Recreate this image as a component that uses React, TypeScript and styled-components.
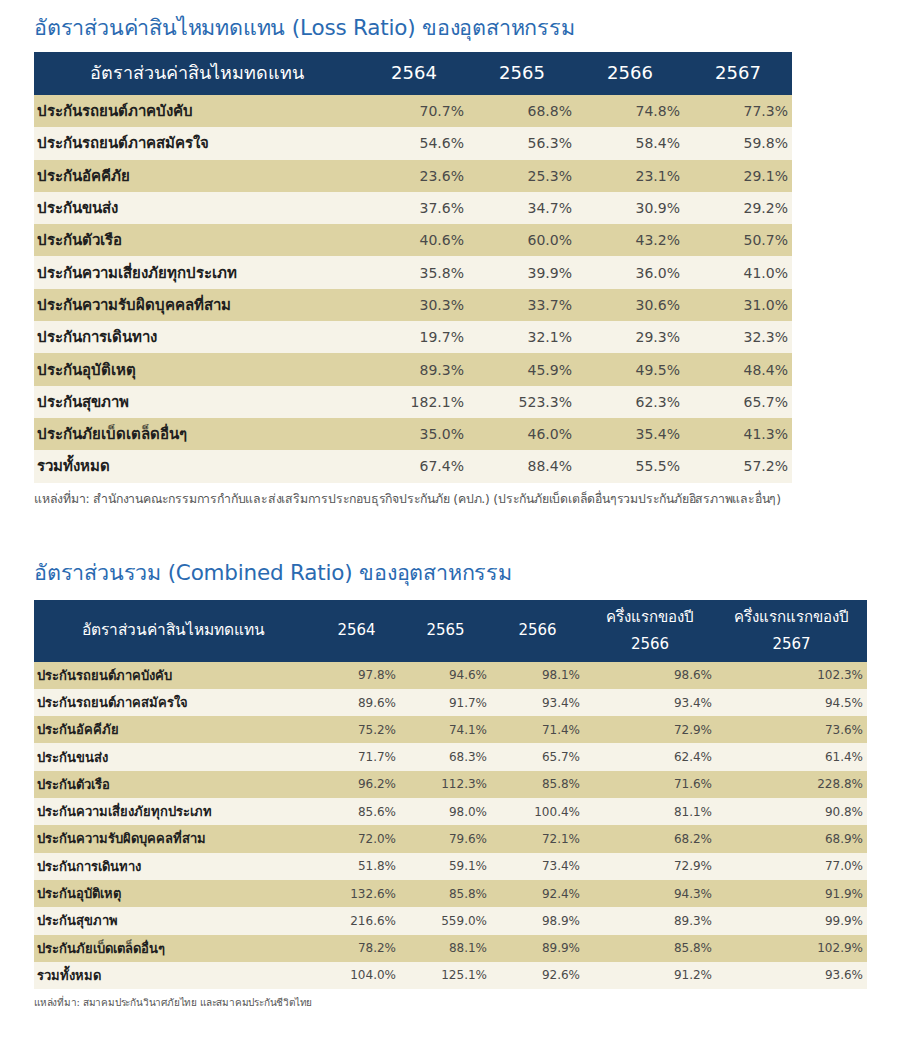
import React from "react";
import styled, { createGlobalStyle } from "styled-components";

const Global = createGlobalStyle`
  html, body { margin: 0; padding: 0; background: #ffffff; }
  body { font-family: "DejaVu Sans", "Noto Sans", sans-serif; }
`;

const Page = styled.div`
  width: 909px;
  height: 1038px;
  box-sizing: border-box;
  padding: 14px 0 0 34px;
  display: flex;
  flex-direction: column;
  align-items: flex-start;
`;

const Title = styled.h2<{ $mt?: number }>`
  margin: ${(p) => p.$mt ?? 0}px 0 0 0;
  font-family: "DejaVu Sans", "Noto Sans", sans-serif;
  font-weight: normal;
  font-size: 21.5px;
  line-height: 28px;
  color: #2a6ab1;
  letter-spacing: -0.2px;
`;

const Table = styled.table<{ $mt: number; $w: number }>`
  margin-top: ${(p) => p.$mt}px;
  width: ${(p) => p.$w}px;
  border-collapse: collapse;
  table-layout: fixed;
`;

const HeadCell = styled.th<{ $w: number; $h: number; $fs: number }>`
  width: ${(p) => p.$w}px;
  height: ${(p) => p.$h}px;
  padding: 0;
  background: #173c66;
  color: #ffffff;
  font-weight: normal;
  font-size: ${(p) => p.$fs}px;
  line-height: 1.8;
  text-align: center;
  vertical-align: middle;
`;

const Row = styled.tr<{ $odd: boolean }>`
  background: ${(p) => (p.$odd ? "#ddd3a3" : "#f6f3e8")};
`;

const Label = styled.td<{ $h: number; $fs: number }>`
  height: ${(p) => p.$h}px;
  padding: 0 0 0 3px;
  font-weight: bold;
  font-size: ${(p) => p.$fs}px;
  color: #1e1e1e;
  text-align: left;
  white-space: nowrap;
  vertical-align: middle;
`;

const Value = styled.td<{ $fs: number }>`
  padding: 0 4px 0 0;
  font-size: ${(p) => p.$fs}px;
  color: #4a4a4a;
  text-align: right;
  vertical-align: middle;
`;

const Source = styled.div<{ $mt: number; $fs: number }>`
  margin-top: ${(p) => p.$mt}px;
  font-size: ${(p) => p.$fs}px;
  color: #555555;
  letter-spacing: -0.2px;
`;

const Line = styled.span`
  display: block;
`;

const lossRows: [string, string[]][] = [
  ["ประกันรถยนต์ภาคบังคับ", ["70.7%", "68.8%", "74.8%", "77.3%"]],
  ["ประกันรถยนต์ภาคสมัครใจ", ["54.6%", "56.3%", "58.4%", "59.8%"]],
  ["ประกันอัคคีภัย", ["23.6%", "25.3%", "23.1%", "29.1%"]],
  ["ประกันขนส่ง", ["37.6%", "34.7%", "30.9%", "29.2%"]],
  ["ประกันตัวเรือ", ["40.6%", "60.0%", "43.2%", "50.7%"]],
  ["ประกันความเสี่ยงภัยทุกประเภท", ["35.8%", "39.9%", "36.0%", "41.0%"]],
  ["ประกันความรับผิดบุคคลที่สาม", ["30.3%", "33.7%", "30.6%", "31.0%"]],
  ["ประกันการเดินทาง", ["19.7%", "32.1%", "29.3%", "32.3%"]],
  ["ประกันอุบัติเหตุ", ["89.3%", "45.9%", "49.5%", "48.4%"]],
  ["ประกันสุขภาพ", ["182.1%", "523.3%", "62.3%", "65.7%"]],
  ["ประกันภัยเบ็ดเตล็ดอื่นๆ", ["35.0%", "46.0%", "35.4%", "41.3%"]],
  ["รวมทั้งหมด", ["67.4%", "88.4%", "55.5%", "57.2%"]],
];

const combinedRows: [string, string[]][] = [
  ["ประกันรถยนต์ภาคบังคับ", ["97.8%", "94.6%", "98.1%", "98.6%", "102.3%"]],
  ["ประกันรถยนต์ภาคสมัครใจ", ["89.6%", "91.7%", "93.4%", "93.4%", "94.5%"]],
  ["ประกันอัคคีภัย", ["75.2%", "74.1%", "71.4%", "72.9%", "73.6%"]],
  ["ประกันขนส่ง", ["71.7%", "68.3%", "65.7%", "62.4%", "61.4%"]],
  ["ประกันตัวเรือ", ["96.2%", "112.3%", "85.8%", "71.6%", "228.8%"]],
  ["ประกันความเสี่ยงภัยทุกประเภท", ["85.6%", "98.0%", "100.4%", "81.1%", "90.8%"]],
  ["ประกันความรับผิดบุคคลที่สาม", ["72.0%", "79.6%", "72.1%", "68.2%", "68.9%"]],
  ["ประกันการเดินทาง", ["51.8%", "59.1%", "73.4%", "72.9%", "77.0%"]],
  ["ประกันอุบัติเหตุ", ["132.6%", "85.8%", "92.4%", "94.3%", "91.9%"]],
  ["ประกันสุขภาพ", ["216.6%", "559.0%", "98.9%", "89.3%", "99.9%"]],
  ["ประกันภัยเบ็ดเตล็ดอื่นๆ", ["78.2%", "88.1%", "89.9%", "85.8%", "102.9%"]],
  ["รวมทั้งหมด", ["104.0%", "125.1%", "92.6%", "91.2%", "93.6%"]],
];

const lossWidths = [326, 108, 108, 108, 108];
const combWidths = [279, 87, 91, 93, 132, 151];
const sum = (a: number[]) => a.reduce((s, x) => s + x, 0);

export default function App() {
  return (
    <>
      <Global />
      <Page>
        <Title>อัตราส่วนค่าสินไหมทดแทน (Loss Ratio) ของอุตสาหกรรม</Title>
        <Table $mt={10} $w={sum(lossWidths)}>
          <thead>
            <tr>
              <HeadCell $w={lossWidths[0]} $h={43} $fs={18}>อัตราส่วนค่าสินไหมทดแทน</HeadCell>
              {["2564", "2565", "2566", "2567"].map((y, i) => (
                <HeadCell key={y} $w={lossWidths[i + 1]} $h={43} $fs={18}>
                  {y}
                </HeadCell>
              ))}
            </tr>
          </thead>
          <tbody>
            {lossRows.map(([label, vals], i) => (
              <Row key={label} $odd={i % 2 === 0}>
                <Label $h={32.3} $fs={15}>{label}</Label>
                {vals.map((v, j) => (
                  <Value key={j} $fs={14}>{v}</Value>
                ))}
              </Row>
            ))}
          </tbody>
        </Table>
        <Source $mt={6} $fs={12.3}>
          แหล่งที่มา: สำนักงานคณะกรรมการกำกับและส่งเสริมการประกอบธุรกิจประกันภัย (คปภ.) (ประกันภัยเบ็ดเตล็ดอื่นๆรวมประกันภัยอิสรภาพและอื่นๆ)
        </Source>

        <Title $mt={51}>อัตราส่วนรวม (Combined Ratio) ของอุตสาหกรรม</Title>
        <Table $mt={13} $w={sum(combWidths)}>
          <thead>
            <tr>
              <HeadCell $w={combWidths[0]} $h={62} $fs={15.5}>อัตราส่วนค่าสินไหมทดแทน</HeadCell>
              <HeadCell $w={combWidths[1]} $h={62} $fs={15}>2564</HeadCell>
              <HeadCell $w={combWidths[2]} $h={62} $fs={15}>2565</HeadCell>
              <HeadCell $w={combWidths[3]} $h={62} $fs={15}>2566</HeadCell>
              <HeadCell $w={combWidths[4]} $h={62} $fs={15}>
                <Line>ครึ่งแรกของปี</Line>
                <Line>2566</Line>
              </HeadCell>
              <HeadCell $w={combWidths[5]} $h={62} $fs={15}>
                <Line>ครึ่งแรกแรกของปี</Line>
                <Line>2567</Line>
              </HeadCell>
            </tr>
          </thead>
          <tbody>
            {combinedRows.map(([label, vals], i) => (
              <Row key={label} $odd={i % 2 === 0}>
                <Label $h={27.3} $fs={13}>{label}</Label>
                {vals.map((v, j) => (
                  <Value key={j} $fs={12}>{v}</Value>
                ))}
              </Row>
            ))}
          </tbody>
        </Table>
        <Source $mt={6} $fs={10}>แหล่งที่มา: สมาคมประกันวินาศภัยไทย และสมาคมประกันชีวิตไทย</Source>
      </Page>
    </>
  );
}
